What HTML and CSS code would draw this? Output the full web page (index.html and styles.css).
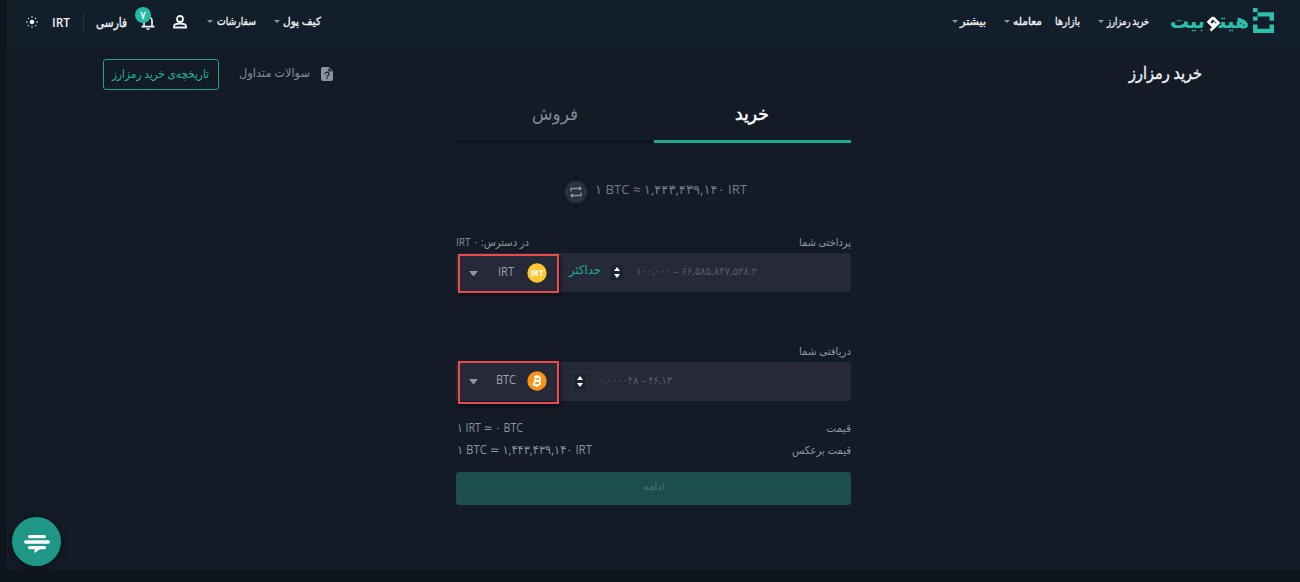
FILE: index.html
```html
<!DOCTYPE html>
<html lang="fa" dir="rtl">
<head>
<meta charset="utf-8">
<title>خرید رمزارز</title>
<link rel="stylesheet" href="styles.css">
</head>
<body>
<div class="app">
<header class="header">
  <div class="brand">
    <svg class="brand-mark" width="21" height="25" viewBox="0 0 21 25"><path fill="#2bc0ab" d="M0 0h4.5v4.3H0zM4.5 4.3H21v8.4h-4.5V8.5h-12zM0 8.5h4.5v4.2H0zM0 16.5h4.5v4.2h12v-4.2H21V25H0z"/></svg>
    <svg class="brand-name" width="80" height="30" viewBox="0 0 80 30"><text x="50" y="20" textLength="30" lengthAdjust="spacingAndGlyphs" fill="#2bc0ab">هیت&zwj;</text><text x="1" y="20" textLength="35" lengthAdjust="spacingAndGlyphs" fill="#2bc0ab">بیت</text><path d="M44 9.500l5.500 5.500-8 7.500M44 9.500l-4.500 4.500 3.500 3.500 3-3" fill="none" stroke="#fff" stroke-width="2.600"/></svg>
  </div>
  <nav class="nav nav-main">
    <a class="t w-buy">خرید رمزارز</a><i class="caret c1"></i>
    <a class="t w-markets">بازارها</a>
    <a class="t w-trade">معامله</a><i class="caret c2"></i>
    <a class="t w-more">بیشتر</a><i class="caret c3"></i>
  </nav>
  <nav class="nav nav-user">
    <a class="t w-wallet">کیف پول</a><i class="caret c4"></i>
    <a class="t w-orders">سفارشات</a><i class="caret c5"></i>
  </nav>
  <div class="tools">
    <svg class="person" width="14" height="14" viewBox="0 0 14 14"><circle cx="7" cy="4" r="3" /><path d="M1 12.500v-1.300C1 9.200 4 8.500 7 8.500s6 .7 6 2.700v1.300z"/></svg>
    <div class="bell"><svg width="14" height="16" viewBox="0 0 14 16"><path d="M0.500 12.700h13M3 12.500V7a4 4 0 0 1 8 0v5.500" fill="none" stroke="#eef1f4" stroke-width="1.700"/><path d="M5.500 14.300h3v1.500h-3zM6 1.200h2v2H6z" fill="#eef1f4"/></svg><span class="badge">۷</span></div>
    <a class="t w-lang">فارسی</a>
    <i class="divider"></i>
    <a class="t w-irt" dir="ltr">IRT</a>
    <svg class="sun" width="12" height="12" viewBox="0 0 12 12" fill="#eef1f4"><circle cx="6" cy="6" r="2.300"/><circle cx="6" cy="1" r=".8"/><circle cx="6" cy="11" r=".8"/><circle cx="1" cy="6" r=".8"/><circle cx="11" cy="6" r=".8"/><circle cx="2.400" cy="2.400" r=".7"/><circle cx="9.600" cy="2.400" r=".7"/><circle cx="2.400" cy="9.600" r=".7"/><circle cx="9.600" cy="9.600" r=".7"/></svg>
  </div>
</header>
<div class="subhead">
  <h1 class="t w-title">خرید رمزارز</h1>
  <div class="actions">
    <svg width="12" height="14" viewBox="0 0 12 14"><path fill="#8c929f" d="M2 0h5.500L12 4.500V12a2 2 0 0 1-2 2H2a2 2 0 0 1-2-2V2a2 2 0 0 1 2-2z"/><path d="M4 7.300a2 1.900 0 1 1 3 1.400q-1 .4-1 1.200" fill="none" stroke="#121b26" stroke-width="1.200"/><path fill="#121b26" d="M5.400 10.800h1.300v1.300H5.400zM7.500 1v3.500H11z"/></svg>
    <a class="t w-faq">سوالات متداول</a>
    <a class="history"><span class="t w-history">تاریخچه‌ی خرید رمزارز</span></a>
  </div>
</div>
<main class="exchange">
  <div class="tabs">
    <div class="tab active"><span class="t w-tabbuy">خرید</span></div>
    <div class="tab"><span class="t w-tabsell">فروش</span></div>
  </div>
  <div class="rate" dir="ltr">
    <svg width="22" height="22" viewBox="0 0 22 22"><circle cx="11" cy="11" r="11" fill="#2c3142"/><g fill="none" stroke="#8b91a0" stroke-width="1.300"><path d="M6 10.500V7.500h9M16 11.500v3H7"/></g><path fill="#8b91a0" d="M14 5l3 2.500-3 2.500zM8 12l-3 2.500L8 17z"/></svg>
    <span class="t w-rate">۱ BTC ≈ ۱,۴۴۳,۴۳۹,۱۴۰ IRT</span>
  </div>
  <div class="labels"><span class="t w-pay">پرداختی شما</span><span class="t w-avail">در دسترس: ۰ IRT</span></div>
  <div class="field" dir="ltr">
    <div class="coin"><i class="arrow"></i><span class="t w-c1">IRT</span><svg width="20" height="20" viewBox="0 0 20 20"><circle cx="10" cy="10" r="9.700" fill="#fdc72f"/><text class="irt-mark" x="10" y="13.200" text-anchor="middle">IRT</text></svg></div>
    <span class="t w-max" dir="rtl">حداکثر</span>
    <span class="stepper"><i class="up"></i><i class="down"></i></span>
    <span class="t ph w-ph1">۱۰۰,۰۰۰ – ۶۶,۵۸۵,۸۴۷,۵۲۸.۲</span>
  </div>
  <div class="labels second"><span class="t w-receive">دریافتی شما</span></div>
  <div class="field" dir="ltr">
    <div class="coin btc"><i class="arrow"></i><span class="t w-c2">BTC</span><svg width="20" height="20" viewBox="0 0 20 20"><circle cx="10" cy="10" r="9.700" fill="#f7931a"/><g transform="rotate(13 10 10)" fill="none" stroke="#fff" stroke-width="1.800"><path d="M6.300 6h4.500a1.800 1.800 0 0 1 0 3.800H8M8 9.800h3.400a2 2 0 0 1 0 4.200H6.300M8 6v8"/><path stroke-width="1.300" d="M8.700 4v2M11 4v2M8.700 14v2M11 14v2"/></g></svg></div>
    <span class="stepper"><i class="up"></i><i class="down"></i></span>
    <span class="t ph w-ph2">۰.۰۰۰۰۴۸ – ۴۶.۱۳</span>
  </div>
  <div class="row first"><span class="t w-price">قیمت</span><span class="t w-v1" dir="ltr">۱ IRT ≃ ۰ BTC</span></div>
  <div class="row"><span class="t w-inverse">قیمت برعکس</span><span class="t w-v2" dir="ltr">۱ BTC ≃ ۱,۴۴۳,۴۳۹,۱۴۰ IRT</span></div>
  <div class="submit"><span class="t w-continue">ادامه</span></div>
</main>
<div class="chat"><svg width="26" height="20" viewBox="0 0 26 20" fill="#fff"><rect x="4" y="1" width="18" height="3.200" rx="1.600"/><rect x="0" y="6.200" width="26" height="3.600" rx="1.800"/><path d="M5.500 12h15a1.600 1.600 0 0 1 0 3.200H16L10.500 19v-3.800h-5a1.600 1.600 0 0 1 0-3.200z"/></svg></div>
</div>
</body>
</html>
```
FILE: styles.css
```css
* { box-sizing: border-box; }
body { margin: 0; height: 582px; overflow: hidden; background: #0e151d; color: #eef1f4; font-family: "Open Sans", "DejaVu Sans", sans-serif; font-size: 12px; }
.app { position: relative; width: 1294px; height: 570px; margin-right: 0; margin-left: 6px; background: #121b26; }

/* Labels are condensed horizontally to the widths of the design's typeface. */
.t { display: block; flex: none; white-space: nowrap; line-height: 20px; transform-origin: right center; transform: scaleX(var(--s, 1)); }
[dir="ltr"] .t, .t[dir="ltr"] { transform-origin: left center; }
[dir="ltr"] .t[dir="rtl"] { transform-origin: right center; }

.header { display: flex; height: 48px; background: #131e2b; padding-right: 26px; }
.brand { display: flex; padding-top: 8px; gap: 4px; width: 107px; margin-left: 18px; }
.brand-name { font: bold 20px "DejaVu Sans", sans-serif; direction: ltr; overflow: visible; }
.brand-mark, .brand-name { flex: none; }
.nav { display: flex; padding-top: 11px; font-size: 11px; -webkit-text-stroke: .35px currentColor; }
.nav-main { width: 196px; }
.nav-user { width: 115px; margin-right: 632px; }
.caret { border: 3px solid transparent; border-top-color: #8b929c; border-bottom: 0; width: 6px; height: 3px; margin-top: 9px; flex: none; }
.w-buy { width: 42px; --s: .757; }
.c1 { margin: 9px 3px 0 18px; }
.w-markets { width: 25px; margin-left: 13px; --s: .853; }
.w-trade { width: 29px; --s: .967; }
.c2 { margin: 9px 3px 0 18px; }
.w-more { width: 26px; --s: 1.016; }
.c3 { margin-right: 2px; }
.w-wallet { width: 38px; --s: .962; }
.c4 { margin: 9px 3px 0 18px; }
.w-orders { width: 39px; --s: .84; }
.c5 { margin-right: 4px; }
.tools { display: flex; margin-right: 19px; }
.tools > * { flex: none; }
.person { margin-top: 15px; fill: none; stroke: #eef1f4; stroke-width: 1.8; }
.bell { position: relative; width: 14px; margin: 14px 18px 0 0; }
.badge { position: absolute; left: -6px; top: -7px; width: 16px; height: 16px; border-radius: 50%; background: #26b9a5; font-size: 11px; line-height: 15px; text-align: center; -webkit-text-stroke: .3px currentColor; }
.w-lang { width: 31px; margin: 12px 14px 0 0; font-size: 13px; -webkit-text-stroke: .35px currentColor; --s: .81; }
.divider { width: 1px; height: 20px; margin: 12px 12px 0 0; background: #27313d; }
.w-irt { width: 18px; margin: 13px 13px 0 0; font-size: 12.5px; font-weight: 600; --s: .955; }
.sun { margin: 16px 14px 0 0; }

.subhead { display: flex; justify-content: space-between; height: 53px; padding: 11px 98px 0 97px; }
.w-title { width: 73px; margin: 4px 0 0; font-size: 17px; font-weight: 400; -webkit-text-stroke: .4px currentColor; --s: .851; }
.actions { display: flex; }
.actions > svg { margin-top: 8px; }
.w-faq { width: 71px; margin: 4px 11px 0 20px; font-size: 12px; color: #858b98; --s: .946; }
.history { width: 116px; height: 31px; border: 1px solid #22a08f; border-radius: 3px; padding: 4px 9px; color: #25b39f; }
.w-history { width: 97px; font-size: 12px; --s: .873; }

.exchange { width: 395px; margin-right: 449px; }
.tabs { display: flex; height: 42px; }
.tab { flex: 1; display: flex; justify-content: center; padding-top: 2px; border-bottom: 3px solid #0d141b; color: #818896; font-size: 18px; }
.tab.active { border-color: #21a693; color: #fff; }
.w-tabbuy { width: 34px; -webkit-text-stroke: .5px currentColor; --s: .958; }
.w-tabsell { width: 46px; --s: .935; }
.rate { display: flex; padding: 38px 0 0 109px; gap: 8px; height: 89px; color: #737b88; font-size: 13px; }
.w-rate { width: 152px; margin-top: -2px; --s: 1.011; }
.labels { display: flex; justify-content: space-between; height: 21px; color: #8c95a1; font-size: 11px; }
.w-pay { width: 52px; --s: .894; }
.w-avail { width: 73px; --s: .907; }

.field { display: flex; height: 39px; border-radius: 4px; background: #262a38; }
.coin { display: flex; flex: none; width: 101px; height: 39px; margin: 1px 0 0 2px; border: 2px solid #ed4a4e; padding: 7px 9px; box-shadow: 1px 2px 3px #0a0e15; color: #9ba2ae; }
.btc { height: 43px; margin-top: -1px; padding-top: 8px; }
.arrow { width: 9px; height: 5px; border: 4.5px solid transparent; border-top: 5px solid #8d95a2; border-bottom: 0; margin-top: 8px; }
.w-c1 { width: 16px; margin: -1px 13px 0 20px; --s: .921; }
.w-c2 { width: 20px; margin: -1px 11px 0 18px; --s: .912; }
.coin svg { flex: none; }
.irt-mark { font: bold 8px "Open Sans", sans-serif; fill: #fff; }
.w-max { width: 32px; margin: 7px 0 0 10px; color: #24a895; --s: .969; }
.stepper { width: 12px; height: 15px; margin: 12px 0 0 10px; background: #1b2331; display: flex; flex-direction: column; align-items: center; justify-content: space-between; padding: 2px 0; }
.btc + .stepper { margin-left: 15px; }
.up, .down { border: 3.5px solid transparent; }
.up { border-top: 0; border-bottom: 4px solid #fff; }
.down { border-bottom: 0; border-top: 4px solid #fff; }
.ph { color: #545b69; font-size: 11px; margin: 8px 0 0 13px; }
.w-ph1 { width: 121px; --s: .918; }
.w-ph2 { width: 73px; --s: .89; }
.second { margin-top: 49px; }
.w-receive { width: 52px; --s: .926; }

.row { display: flex; justify-content: space-between; height: 22px; padding-left: 1px; color: #8b94a1; font-size: 11px; }
.first { margin-top: 17px; }
.w-price { width: 25px; --s: .971; }
.w-inverse { width: 59px; --s: .916; }
.w-v1 { width: 66px; font-size: 12px; --s: .883; }
.w-v2 { width: 135px; font-size: 12px; --s: .95; }
.submit { display: flex; justify-content: center; margin-top: 10px; height: 33px; padding-top: 4px; border-radius: 3px; background: #1c4e50; color: #566a72; font-size: 11px; }
.w-continue { width: 22px; --s: .964; }

.chat { position: absolute; left: 6px; bottom: 4px; width: 49px; height: 49px; border-radius: 50%; background: #1e9787; display: flex; align-items: center; justify-content: center; box-shadow: 0 1px 6px #0b1119; }
.chat svg { margin-top: 4px; }
```
